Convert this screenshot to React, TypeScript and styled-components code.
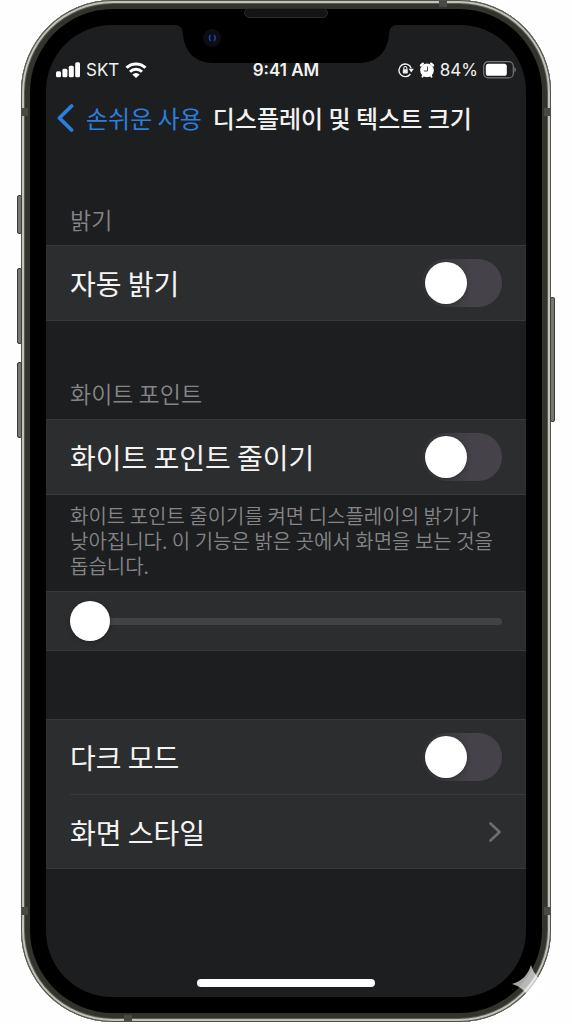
import React, { useState } from "react";
import styled, { createGlobalStyle } from "styled-components";

const GlobalStyle = createGlobalStyle`
  *, *::before, *::after { box-sizing: border-box; }
  body {
    margin: 0;
    background: #fefefe;
    font-family: "Noto Sans CJK KR", sans-serif;
    -webkit-font-smoothing: antialiased;
  }
`;

const Page = styled.div`
  padding: 0 21px 2px;
`;

const Phone = styled.div`
  position: relative;
  display: flex;
  min-height: calc(100vh - 2px);
  padding: 25px;
  border-radius: 92px;
  background: #000;
  box-shadow:
    inset 0 0 0 1px #50504c,
    inset 0 0 0 3px #c4c3ba,
    inset 0 0 0 4px #5c5c56,
    inset 0 0 0 9px #33332e;
`;

const SideKey = styled.span<{ $side: "left" | "right"; $top: number; $length: number }>`
  position: absolute;
  ${(p) => p.$side}: -4px;
  top: ${(p) => p.$top}px;
  width: 5px;
  height: ${(p) => p.$length}px;
  border: 1px solid #3c3c38;
  border-radius: 2px;
  background: #77776f;
`;

const Antenna = styled.span<{ $edge: "top" | "right" | "bottom" | "left"; $at: number }>`
  position: absolute;
  background: #484845;
  ${(p) => p.$edge}: 1px;
  ${(p) =>
    p.$edge === "top" || p.$edge === "bottom"
      ? `left: ${p.$at}px; width: 8px; height: 6px;`
      : `top: ${p.$at}px; width: 6px; height: 8px;`}
`;

const Notch = styled.svg`
  position: absolute;
  top: 5px;
  left: 50%;
  margin-left: -113px;
`;

const Sparkle = styled.svg`
  position: absolute;
  right: 0;
  bottom: 18px;
`;

const Screen = styled.div`
  flex: 1;
  min-width: 0;
  display: flex;
  flex-direction: column;
  padding: 33px 0 10px;
  border-radius: 66px;
  overflow: hidden;
  background: #1d1e20;
  color: #f2f2f2;
`;

const StatusBar = styled.div`
  display: grid;
  grid-template-columns: 1fr auto 1fr;
  align-items: center;
  height: 24px;
  padding: 0 10px;
  font-family: Inter, sans-serif;
  font-size: 17px;
  line-height: 24px;
`;

const StatusGroup = styled.div<{ $end?: boolean }>`
  display: flex;
  align-items: center;
  gap: ${(p) => (p.$end ? 4 : 6)}px;
  justify-content: ${(p) => (p.$end ? "flex-end" : "flex-start")};

  svg {
    flex: none;
  }
`;

const Clock = styled.time`
  font-weight: 600;
`;

const NavBar = styled.header`
  display: flex;
  align-items: center;
  gap: 11px;
  padding: 18px 10px 11px;
  font-size: 24px;
  line-height: 36px;
  white-space: nowrap;
`;

const BackLink = styled.a`
  display: flex;
  align-items: center;
  gap: 10px;
  color: #2a7fdc;
  text-decoration: none;
`;

const Title = styled.h1`
  margin: 0;
  font-size: inherit;
  font-weight: 500;
`;

const SectionTitle = styled.h2`
  margin: 0;
  padding: 56px 24px 10px;
  font-size: 23px;
  font-weight: 350;
  line-height: 32px;
  color: #858587;
`;

const Group = styled.section<{ $spaced?: boolean }>`
  margin-top: ${(p) => (p.$spaced ? 68 : 0)}px;
  padding-left: 24px;
  border: solid #39393b;
  border-width: 1px 0;
  background: #2c2d2f;

  & > * + * {
    border-top: 1px solid #39393b;
  }
`;

const Row = styled.label`
  display: flex;
  align-items: center;
  justify-content: space-between;
  min-height: 74px;
  padding-right: 24px;
  font-size: 28px;
  line-height: 40px;
  color: #f4f4f4;
  text-decoration: none;
`;

const Switch = styled.input`
  appearance: none;
  flex: none;
  display: flex;
  align-items: center;
  width: 80px;
  height: 48px;
  margin: 0;
  padding: 3px;
  border-radius: 24px;
  background: linear-gradient(90deg, #333336 0, #454349 50px);

  &::before {
    content: "";
    width: 42px;
    height: 42px;
    border-radius: 50%;
    background: #fff;
    box-shadow: 0 1px 4px rgba(0, 0, 0, 0.25);
  }

  &:checked {
    justify-content: flex-end;
    background: #30d158;
  }
`;

const Footnote = styled.p`
  margin: 0;
  padding: 8px 24px 13px;
  font-size: 20px;
  font-weight: 350;
  line-height: 25px;
  color: #858587;
  word-break: keep-all;
`;

const SliderRow = styled.div`
  display: flex;
  align-items: center;
  height: 58px;
  padding-right: 24px;
`;

const Slider = styled.input`
  appearance: none;
  width: 100%;
  height: 40px;
  margin: 0;
  background: transparent;

  &::-webkit-slider-runnable-track {
    height: 7px;
    border-radius: 4px;
    background: #434247;
  }

  &::-webkit-slider-thumb {
    appearance: none;
    width: 40px;
    height: 40px;
    margin-top: -17px;
    border-radius: 50%;
    background: #fff;
    box-shadow: 0 1px 4px rgba(0, 0, 0, 0.25);
  }
`;

const HomeIndicator = styled.div`
  width: 178px;
  height: 8px;
  margin: auto auto 0;
  border-radius: 4px;
  background: #fff;
`;

const SignalIcon = () => (
  <svg width="24" height="16" viewBox="0 0 24 16" fill="#fff">
    <rect x="0" y="9.3" width="5" height="6" rx="1.5" />
    <rect x="6.4" y="6.8" width="5" height="8.5" rx="1.5" />
    <rect x="12.8" y="3.8" width="5" height="11.5" rx="1.5" />
    <rect x="19.2" y="0.3" width="4.8" height="15" rx="1.5" />
  </svg>
);

const WifiIcon = () => (
  <svg width="22" height="16" viewBox="0 0 22 16" fill="none" stroke="#fff" strokeWidth="3">
    <path d="M1.5 5.8a13.6 13.6 0 0 1 19 0" />
    <path d="M5 9.8a8.6 8.6 0 0 1 12 0" />
    <path d="M11 16 7.3 12.4a5.3 5.3 0 0 1 7.4 0Z" fill="#fff" stroke="none" />
  </svg>
);

const RotationLockIcon = () => (
  <svg width="16" height="16" viewBox="0 0 16 16" fill="none" stroke="#f2f2f2">
    <path d="M12.4 12A6.3 6.3 0 1 1 13.2 6.2" strokeWidth="1.4" />
    <path d="M10.6 6.8h5.2l-2.5 3.6z" fill="#f2f2f2" stroke="none" />
    <rect x="4.8" y="7.2" width="5" height="4.3" rx="0.8" fill="#f2f2f2" stroke="none" />
    <path d="M5.8 7.4V6a1.5 1.5 0 0 1 3 0v1.4" strokeWidth="1.1" />
  </svg>
);

const AlarmIcon = () => (
  <svg width="18" height="16" viewBox="0 0 18 16">
    <circle cx="9" cy="8.4" r="6.8" fill="#fff" />
    <path d="M4.4 14.8 5.6 13M13.6 14.8 12.4 13" stroke="#fff" strokeWidth="1.8" strokeLinecap="round" />
    <path d="M2.9 3.4 4.9 1.6M15.1 3.4 13.1 1.6" stroke="#fff" strokeWidth="2.2" strokeLinecap="round" />
    <path d="M9.5 4.5v4.5H6" fill="none" stroke="#4a4a4c" strokeWidth="1" />
  </svg>
);

const BatteryIcon = () => (
  <svg width="34" height="18" viewBox="0 0 34 18">
    <rect x="1.7" y="0.7" width="29.6" height="16.2" rx="4.5" fill="none" stroke="#77777a" strokeWidth="1.2" />
    <rect x="3.8" y="2.8" width="21" height="12" rx="2.6" fill="#fff" />
    <path d="M32.4 6.2c2 .9 2 4.4 0 5.2z" fill="#77777a" />
  </svg>
);

type ToggleRowProps = { label: string };

const ToggleRow = ({ label }: ToggleRowProps) => {
  const [on, setOn] = useState(false);
  return (
    <Row>
      {label}
      <Switch type="checkbox" role="switch" checked={on} onChange={(e) => setOn(e.target.checked)} />
    </Row>
  );
};

export default function App() {
  const [level, setLevel] = useState(0);

  return (
    <Page>
      <GlobalStyle />
      <Phone>
        <SideKey $side="left" $top={195} $length={39} />
        <SideKey $side="left" $top={268} $length={76} />
        <SideKey $side="left" $top={362} $length={76} />
        <SideKey $side="right" $top={297} $length={125} />
        <Antenna $edge="top" $at={418} />
        <Antenna $edge="left" $at={108} />
        <Antenna $edge="right" $at={108} />
        <Antenna $edge="left" $at={907} />
        <Antenna $edge="right" $at={907} />
        <Antenna $edge="bottom" $at={103} />

        <Screen>
          <StatusBar>
            <StatusGroup>
              <SignalIcon />
              <span>SKT</span>
              <WifiIcon />
            </StatusGroup>
            <Clock>9:41 AM</Clock>
            <StatusGroup $end>
              <RotationLockIcon />
              <AlarmIcon />
              <span>84%</span>
              <BatteryIcon />
            </StatusGroup>
          </StatusBar>

          <NavBar>
            <BackLink href="#accessibility">
              <svg width="20" height="30" viewBox="0 0 20 30" fill="none" stroke="currentColor" strokeWidth="3.8" strokeLinecap="round" strokeLinejoin="round">
                <path d="M15.6 3 3.4 15 15.6 27" />
              </svg>
              손쉬운 사용
            </BackLink>
            <Title>디스플레이 및 텍스트 크기</Title>
          </NavBar>

          <SectionTitle>밝기</SectionTitle>
          <Group>
            <ToggleRow label="자동 밝기" />
          </Group>

          <SectionTitle>화이트 포인트</SectionTitle>
          <Group>
            <ToggleRow label="화이트 포인트 줄이기" />
          </Group>
          <Footnote>
            화이트 포인트 줄이기를 켜면 디스플레이의 밝기가 낮아집니다. 이 기능은 밝은 곳에서 화면을 보는 것을 돕습니다.
          </Footnote>

          <Group>
            <SliderRow>
              <Slider
                type="range"
                min={0}
                max={100}
                value={level}
                aria-label="화이트 포인트"
                onChange={(e) => setLevel(Number(e.target.value))}
              />
            </SliderRow>
          </Group>

          <Group $spaced>
            <ToggleRow label="다크 모드" />
            <Row as="a" href="#style">
              화면 스타일
              <svg width="14" height="22" viewBox="0 0 14 22" fill="none" stroke="#6c6c6f" strokeWidth="2.8" strokeLinecap="round" strokeLinejoin="round">
                <path d="M2.5 2.5 11.5 11l-9 8.5" />
              </svg>
            </Row>
          </Group>

          <HomeIndicator />
        </Screen>

        <Notch width="226" height="60" viewBox="0 0 226 60" fill="none">
          <path d="M0 19.5H226C219 20 216 23 216 30 214 47 204 58 186 58H40C22 58 12 47 10 30 10 23 7 20 0 19.5Z" fill="#000" />
          <rect x="71.5" y="3.5" width="83" height="9" rx="4.5" fill="#141414" stroke="#292929" />
          <circle cx="39" cy="33" r="9" fill="#0e0e12" />
          <circle cx="39" cy="33" r="5.5" fill="#0b0d1c" />
          <path d="M37.6 30q-2.4 3 0 6M41 30q2.4 3 0 6" stroke="#2c3f8e" strokeWidth="1.6" />
        </Notch>
        <Sparkle width="40" height="40" viewBox="0 0 40 40">
          <path d="M20 1C23 11 29 17 39 20 29 23 23 29 20 39 17 29 11 23 1 20 11 17 17 11 20 1Z" fill="#fff" fillOpacity="0.65" />
        </Sparkle>
      </Phone>
    </Page>
  );
}
